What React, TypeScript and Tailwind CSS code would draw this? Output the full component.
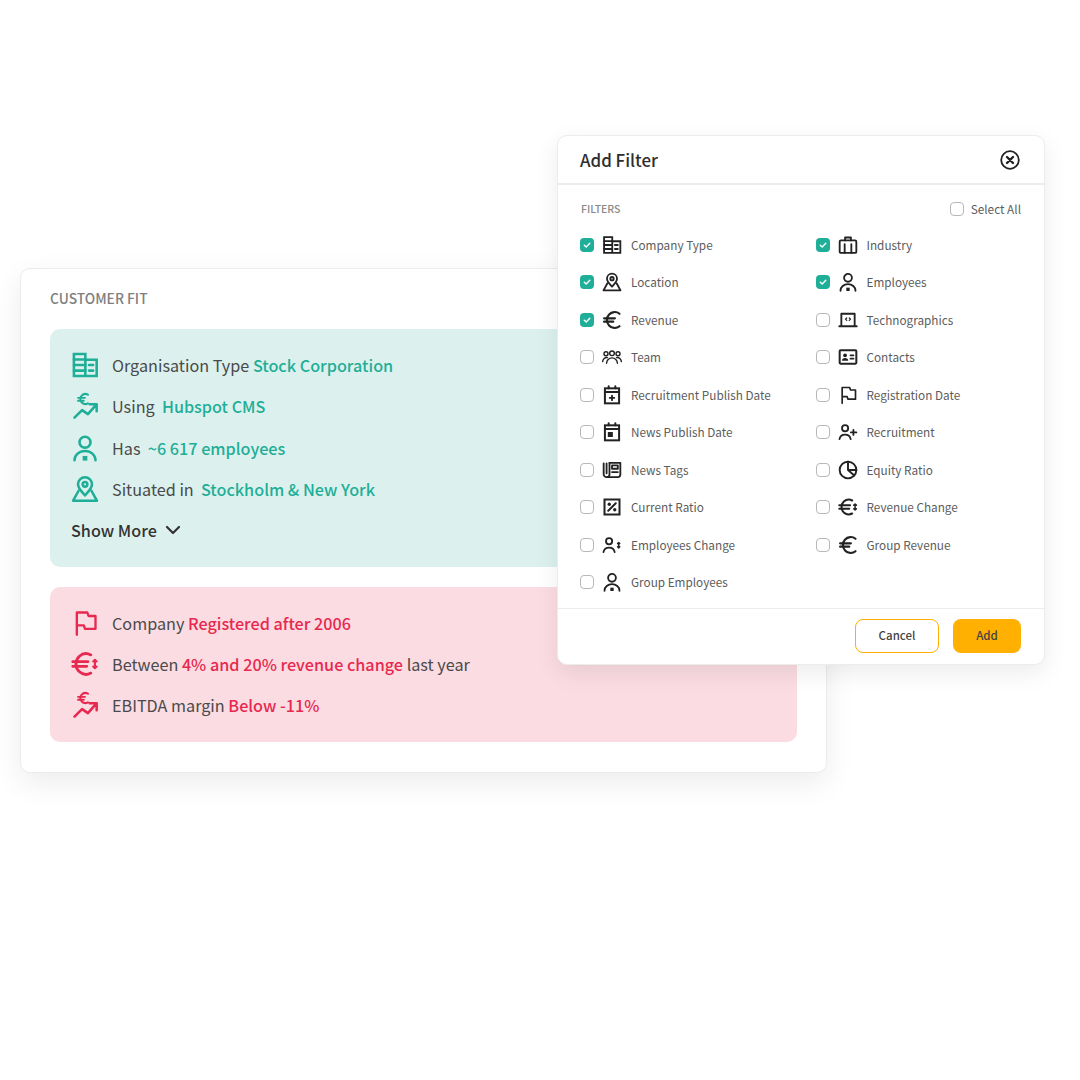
import type { ReactNode } from 'react'

type IconProps = { className?: string }

function Svg({ className, children }: IconProps & { children: ReactNode }) {
  return (
    <svg viewBox="0 0 24 24" fill="none" stroke="currentColor" strokeWidth={2.200} strokeLinecap="round" strokeLinejoin="round" className={className}>
      {children}
    </svg>
  )
}

const Building = ({ className }: IconProps) => (
  <Svg className={className}>
    <path d="M2.500 2.500h9.800v19H2.500zM12.300 7.500h9.700v14h-9.700" strokeLinecap="square" strokeLinejoin="miter" />
    <path d="M2.500 7.300h9.800M2.500 12h9.800M2.500 16.800h9.800M15.500 12h3.500M15.500 16.800h3.500" />
  </Svg>
)
const Trend = ({ className }: IconProps) => (
  <Svg className={className}>
    <path d="M3 22l6.500-6.500 5 3.500 7-8M16 10.500h6v6" />
    <path d="M14.500 2.300a4.500 4.500 0 0 0-5.500 1 4.300 4.300 0 0 0 .2 5.700 4.500 4.500 0 0 0 5.300.8" strokeWidth={1.800} />
    <path d="M6 5h6M6 7.500h5" strokeWidth={1.600} />
  </Svg>
)
const Person = ({ className }: IconProps) => (
  <Svg className={className}>
    <circle cx="12" cy="7" r="4.700" />
    <path d="M3 22.500a9 8 0 0 1 18 0" />
    <rect x="10" y="18.800" width="4" height="4" fill="currentColor" stroke="none" />
  </Svg>
)
const MapPin = ({ className }: IconProps) => (
  <Svg className={className}>
    <path d="M12 17.500c-3-3.300-6-6-6-9.500a6 6 0 0 1 12 0c0 3.500-3 6.200-6 9.500z" />
    <circle cx="12" cy="8" r="2" />
    <path d="M6.500 13.500L1.800 22h20.400l-4.700-8.500" />
  </Svg>
)
const Euro = ({ className }: IconProps) => (
  <Svg className={className}>
    <path d="M21 4.500a9 9 0 0 0-12.500 1A9.500 9.500 0 0 0 8.500 18.500a9 9 0 0 0 12.500 1" strokeWidth={2.600} />
    <path d="M2.500 10h13M2.500 14h11" strokeWidth={2.600} />
  </Svg>
)
const EuroChange = ({ className }: IconProps) => (
  <Svg className={className}>
    <path d="M17 4.200a8.800 8.800 0 0 0-10 1.300 9 9 0 0 0 0 13 8.800 8.800 0 0 0 10 1.300" strokeWidth={2.400} />
    <path d="M1.500 10h13M1.500 14h12" strokeWidth={2.400} />
    <path d="M20.500 8.500v7M19 9.800l1.500-1.300 1.500 1.300M19 14.200l1.500 1.300 1.500-1.300" strokeWidth={1.800} />
  </Svg>
)
const Flag = ({ className }: IconProps) => (
  <Svg className={className}>
    <path d="M5 22V3h9l1 3h6v11h-9l-1-3H5" strokeWidth={2} />
  </Svg>
)
const Briefcase = ({ className }: IconProps) => (
  <Svg className={className}>
    <rect x="2" y="6.500" width="20" height="15" rx="1.500" />
    <path d="M8.500 6.500V3h7v3.500M8 11v10.500M16 11v10.500" />
  </Svg>
)
const Laptop = ({ className }: IconProps) => (
  <Svg className={className}>
    <path d="M4 18V4.500h16V18M1.500 19.500h21" />
    <path d="M10.500 9.500L9 11l1.500 1.500M13.500 9.500L15 11l-1.500 1.500" strokeWidth={1.500} />
  </Svg>
)
const Team = ({ className }: IconProps) => (
  <Svg className={className}>
    <circle cx="12" cy="7.500" r="2.800" strokeWidth={1.700} />
    <circle cx="4.800" cy="8" r="2.400" strokeWidth={1.700} />
    <circle cx="19.200" cy="8" r="2.400" strokeWidth={1.700} />
    <path d="M5.500 19.500a6.500 6.500 0 0 1 13 0M.8 17.500a5 5 0 0 1 5.700-4.800M23.200 17.500a5 5 0 0 0-5.700-4.800" strokeWidth={1.700} />
  </Svg>
)
const Contacts = ({ className }: IconProps) => (
  <Svg className={className}>
    <rect x="2" y="4" width="20" height="16" rx="1" strokeWidth={2.400} />
    <circle cx="8.500" cy="10" r="2.300" fill="currentColor" stroke="none" />
    <path d="M4.800 16.500a3.700 3.200 0 0 1 7.400 0z" fill="currentColor" stroke="none" />
    <path d="M15 10h3.500M15 14h3.500" />
  </Svg>
)
const CalendarPlus = ({ className }: IconProps) => (
  <Svg className={className}>
    <rect x="3.500" y="4" width="17" height="18" strokeWidth={2.400} strokeLinejoin="miter" />
    <path d="M3.500 8.500h17M8 1.500V4M16 1.500V4" strokeWidth={2.400} />
    <path d="M12 12.800v5.400M9.300 15.500h5.400" strokeWidth={2.200} />
  </Svg>
)
const CalendarDot = ({ className }: IconProps) => (
  <Svg className={className}>
    <rect x="3.500" y="4" width="17" height="18" strokeWidth={2.400} strokeLinejoin="miter" />
    <path d="M3.500 8.500h17M8 1.500V4M16 1.500V4" strokeWidth={2.400} />
    <rect x="7" y="12" width="6" height="6" fill="currentColor" stroke="none" />
  </Svg>
)
const UserPlus = ({ className }: IconProps) => (
  <Svg className={className}>
    <circle cx="8.500" cy="7.500" r="3.700" />
    <path d="M1.800 20.500a6.800 6.500 0 0 1 13.400 0M18.500 9.500v6M15.500 12.500h6.500" />
  </Svg>
)
const News = ({ className }: IconProps) => (
  <Svg className={className}>
    <path d="M9 3.500h13v14a3 3 0 0 1-3 3H6" />
    <path d="M9 3.500v14a3 3 0 0 1-3 3 3.500 3.500 0 0 1-4-3.500V4M5.500 4v12" />
    <rect x="12" y="6.500" width="7" height="4" />
    <path d="M12 14.500h7" />
  </Svg>
)
const Pie = ({ className }: IconProps) => (
  <Svg className={className}>
    <circle cx="12" cy="12" r="10" strokeWidth={2.300} />
    <path d="M12 2v10l7.500 6.500M12 12h10" strokeWidth={2.300} />
  </Svg>
)
const Percent = ({ className }: IconProps) => (
  <Svg className={className}>
    <rect x="3" y="3" width="18" height="18" strokeWidth={2.400} strokeLinejoin="miter" />
    <path d="M16.500 7.500l-9 9" strokeWidth={2.400} />
    <circle cx="8.700" cy="8.700" r="2" fill="currentColor" stroke="none" />
    <circle cx="15.300" cy="15.300" r="2" fill="currentColor" stroke="none" />
  </Svg>
)
const UserChange = ({ className }: IconProps) => (
  <Svg className={className}>
    <circle cx="8.500" cy="7.500" r="3.700" />
    <path d="M1.800 20.500a6.800 6.500 0 0 1 13.400 0" />
    <path d="M20 9v6.500M18.700 10.300L20 9l1.300 1.300M18.700 14.200l1.300 1.300 1.300-1.300" strokeWidth={1.800} />
  </Svg>
)

const Check = () => (
  <svg viewBox="0 0 14 14" fill="none" stroke="white" strokeWidth={1.400} strokeLinecap="round" strokeLinejoin="round" className="h-[14px] w-[14px]">
    <path d="M4.300 7.300l1.900 1.700 3.600-3.800" />
  </svg>
)

function Checkbox({ checked }: { checked?: boolean }) {
  if (checked) {
    return (
      <span className="flex h-[14px] w-[14px] shrink-0 items-center justify-center rounded-[4px] bg-[#1fae97]">
        <Check />
      </span>
    )
  }
  return <span className="h-[14px] w-[14px] shrink-0 rounded-[4px] border border-[#b8b8b8] bg-white" />
}

const filters = [
  { label: 'Company Type', icon: Building, checked: true },
  { label: 'Industry', icon: Briefcase, checked: true },
  { label: 'Location', icon: MapPin, checked: true },
  { label: 'Employees', icon: Person, checked: true },
  { label: 'Revenue', icon: Euro, checked: true },
  { label: 'Technographics', icon: Laptop },
  { label: 'Team', icon: Team },
  { label: 'Contacts', icon: Contacts },
  { label: 'Recruitment Publish Date', icon: CalendarPlus },
  { label: 'Registration Date', icon: Flag },
  { label: 'News Publish Date', icon: CalendarDot },
  { label: 'Recruitment', icon: UserPlus },
  { label: 'News Tags', icon: News },
  { label: 'Equity Ratio', icon: Pie },
  { label: 'Current Ratio', icon: Percent },
  { label: 'Revenue Change', icon: EuroChange },
  { label: 'Employees Change', icon: UserChange },
  { label: 'Group Revenue', icon: Euro },
  { label: 'Group Employees', icon: Person },
]

function FitRow({ icon: Icon, tone, children }: { icon: (p: IconProps) => ReactNode; tone: string; children: ReactNode }) {
  return (
    <div className="flex h-[41.33px] items-center">
      <span className={`flex w-[41px] shrink-0 ${tone}`}>
        <Icon className="h-[28px] w-[28px]" />
      </span>
      <span className="whitespace-pre text-[16.200px] text-[#4a4a4a]">{children}</span>
    </div>
  )
}

const G = ({ children }: { children: ReactNode }) => <span className="font-medium text-[#1fae97]">{children}</span>
const R = ({ children }: { children: ReactNode }) => <span className="font-medium text-[#e8294f]">{children}</span>

export default function App() {
  return (
    <div className="relative h-[1080px] w-[1080px] overflow-hidden bg-white font-['Noto_Sans_CJK_SC','Noto_Sans',sans-serif]">
      <div className="ml-5 w-[807px] pt-[268px]">
        <div className="rounded-[10px] border border-[#ececec] bg-white px-[29px] pb-[30px] pt-[19px] shadow-[0_10px_30px_rgba(0,0,0,0.08)]">
          <div className="flex h-[20px] items-center text-[13.800px] font-medium text-[#808080]">CUSTOMER FIT</div>
          <div className="mt-[21px] rounded-[10px] bg-[#dcf1ee] pb-[15.500px] pl-[21px] pt-[15.500px]">
            <FitRow icon={Building} tone="text-[#1fae97]">Organisation Type <G>Stock Corporation</G></FitRow>
            <FitRow icon={Trend} tone="text-[#1fae97]">Using  <G>Hubspot CMS</G></FitRow>
            <FitRow icon={Person} tone="text-[#1fae97]">Has  <G>~6 617 employees</G></FitRow>
            <FitRow icon={MapPin} tone="text-[#1fae97]">Situated in  <G>Stockholm &amp; New York</G></FitRow>
            <div className="flex h-[41.33px] items-center gap-[8px] text-[16.200px] font-medium text-[#333333]">
              Show More
              <svg viewBox="0 0 16 16" fill="none" stroke="currentColor" strokeWidth={2.200} strokeLinecap="round" strokeLinejoin="round" className="h-4 w-4">
                <path d="M2 5l6 6 6-6" />
              </svg>
            </div>
          </div>
          <div className="mt-[20px] rounded-[10px] bg-[#fadce2] pb-[15.500px] pl-[21px] pt-[15.500px]">
            <FitRow icon={Flag} tone="text-[#e8294f]">Company <R>Registered after 2006</R></FitRow>
            <FitRow icon={EuroChange} tone="text-[#e8294f]">Between <R>4% and 20% revenue change</R> last year</FitRow>
            <FitRow icon={Trend} tone="text-[#e8294f]">EBITDA margin <R>Below -11%</R></FitRow>
          </div>
        </div>
      </div>

      <div className="absolute left-[557px] top-[135px] w-[488px] rounded-[10px] border border-[#ececec] bg-white shadow-[0_8px_24px_rgba(0,0,0,0.08)]">
        <div className="flex h-[49px] items-center justify-between border-b-2 border-[#ececec] pl-[22px] pr-[24px]">
          <span className="text-[16.900px] font-medium text-[#2e2e2e]">Add Filter</span>
          <svg viewBox="0 0 20 20" fill="none" stroke="#222222" strokeWidth={1.800} strokeLinecap="round" className="h-5 w-5">
            <circle cx="10" cy="10" r="8.800" />
            <path d="M7 7l6 6M13 7l-6 6" strokeWidth={2.400} />
          </svg>
        </div>
        <div className="pl-[22px] pr-[23px] pt-[15px]">
          <div className="flex h-[18px] items-center justify-between">
            <span className="pl-[1px] text-[10.500px] font-medium text-[#8a8a8a]">FILTERS</span>
            <span className="flex items-center gap-[7px] text-[11.800px] text-[#5c5c5c]">
              <Checkbox />
              Select All
            </span>
          </div>
          <div className="mt-[8px] grid grid-cols-[235.500px_1fr]">
            {filters.map(({ label, icon: Icon, checked }) => (
              <div key={label} className="flex h-[37.500px] items-center">
                <Checkbox checked={checked} />
                <span className="ml-[8px] flex w-[29px] shrink-0 text-[#222222]">
                  <Icon className="h-[20px] w-[20px]" />
                </span>
                <span className="text-[11.750px] text-[#5c5c5c]">{label}</span>
              </div>
            ))}
          </div>
        </div>
        <div className="mt-[7px] flex h-[56px] items-start justify-end gap-[14px] border-t border-[#ececec] pr-[23px] pt-[10px]">
          <button type="button" className="h-[34px] w-[84px] rounded-[8px] border border-[#ffb000] bg-white text-[11.500px] font-medium text-[#444444]">Cancel</button>
          <button type="button" className="h-[34px] w-[68px] rounded-[8px] bg-[#ffb000] text-[11.500px] font-medium text-[#444444]">Add</button>
        </div>
      </div>
    </div>
  )
}
